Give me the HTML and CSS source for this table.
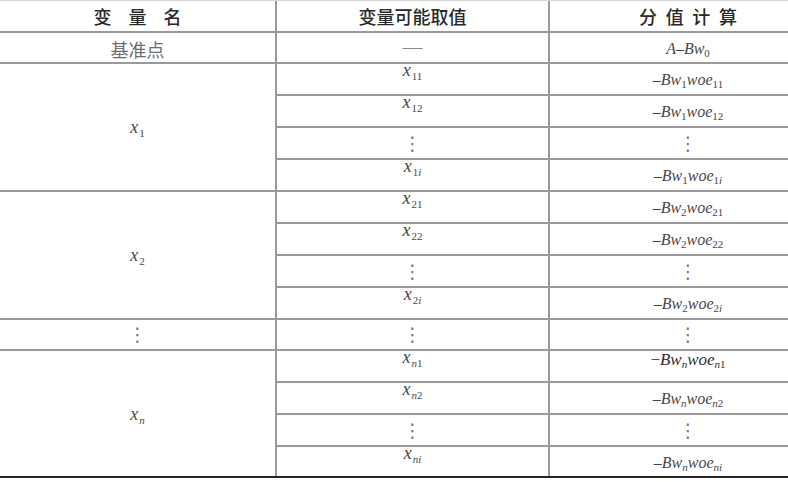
FILE: index.html
```html
<!DOCTYPE html>
<html lang="zh">
<head>
<meta charset="utf-8">
<title>变量分值表</title>
<link rel="stylesheet" href="styles.css">
</head>
<body>
<div class="page">
  <div class="tbl">
    <div class="c c1 h"><span class="sp1">变量名</span></div>
    <div class="c c2 h">变量可能取值</div>
    <div class="c c3 h"><span class="sp3">分值计算</span></div>

    <div class="c c1 base">基准点</div>
    <div class="c c2 dash">—</div>
    <div class="c c3 f"><i>A</i>–<i>Bw</i><sub>0</sub></div>

    <div class="c c1 grp"><span class="lbl"><i>x</i><sub>1</sub></span></div>
    <div class="c c2 v"><i>x</i><sub>11</sub></div>
    <div class="c c3 f">–<i>Bw</i><sub>1</sub><i>woe</i><sub>11</sub></div>
    <div class="c c2 v"><i>x</i><sub>12</sub></div>
    <div class="c c3 f">–<i>Bw</i><sub>1</sub><i>woe</i><sub>12</sub></div>
    <div class="c c2 dots"><span class="vd">⋮</span></div>
    <div class="c c3 dots"><span class="vd">⋮</span></div>
    <div class="c c2 v"><i>x</i><sub>1<i>i</i></sub></div>
    <div class="c c3 f">–<i>Bw</i><sub>1</sub><i>woe</i><sub>1<i>i</i></sub></div>

    <div class="c c1 grp"><span class="lbl"><i>x</i><sub>2</sub></span></div>
    <div class="c c2 v"><i>x</i><sub>21</sub></div>
    <div class="c c3 f">–<i>Bw</i><sub>2</sub><i>woe</i><sub>21</sub></div>
    <div class="c c2 v"><i>x</i><sub>22</sub></div>
    <div class="c c3 f">–<i>Bw</i><sub>2</sub><i>woe</i><sub>22</sub></div>
    <div class="c c2 dots"><span class="vd">⋮</span></div>
    <div class="c c3 dots"><span class="vd">⋮</span></div>
    <div class="c c2 v"><i>x</i><sub>2<i>i</i></sub></div>
    <div class="c c3 f">–<i>Bw</i><sub>2</sub><i>woe</i><sub>2<i>i</i></sub></div>

    <div class="c c1 dots"><span class="vd">⋮</span></div>
    <div class="c c2 dots"><span class="vd">⋮</span></div>
    <div class="c c3 dots"><span class="vd">⋮</span></div>

    <div class="c c1 grp"><span class="lbl"><i>x</i><sub><i>n</i></sub></span></div>
    <div class="c c2 v"><i>x</i><sub><i>n</i>1</sub></div>
    <div class="c c3 f big">−<i>Bw</i><sub><i>n</i></sub><i>woe</i><sub><i>n</i>1</sub></div>
    <div class="c c2 v"><i>x</i><sub><i>n</i>2</sub></div>
    <div class="c c3 f">–<i>Bw</i><sub><i>n</i></sub><i>woe</i><sub><i>n</i>2</sub></div>
    <div class="c c2 dots"><span class="vd">⋮</span></div>
    <div class="c c3 dots"><span class="vd">⋮</span></div>
    <div class="c c2 v"><i>x</i><sub><i>ni</i></sub></div>
    <div class="c c3 f">–<i>Bw</i><sub><i>n</i></sub><i>woe</i><sub><i>ni</i></sub></div>
  </div>
</div>
</body>
</html>
```
FILE: styles.css
```css
html, body {
  margin: 0;
  padding: 0;
  background: #ffffff;
}

.page {
  width: 788px;
  height: 482px;
  overflow: hidden;
}

.tbl {
  display: grid;
  width: 826px;
  grid-template-columns: 275px 273px 278px;
  grid-template-rows: 30px 31px repeat(8, 32px) 31px 32px 32px 32px 31px;
  border-top: 1px solid #d6d6d6;
  border-bottom: 2px solid #262626;
  font-family: "Liberation Serif", "Noto Sans CJK SC", serif;
  color: #474747;
}

.c {
  box-sizing: border-box;
  border-top: 2px solid #9a9a9a;
  text-align: center;
  min-width: 0;
}

.c1 { grid-column: 1; }
.c2 { grid-column: 2; border-left: 2px solid #9a9a9a; }
.c3 { grid-column: 3; border-left: 2px solid #9a9a9a; }

.h {
  border-top: 0;
  display: flex;
  align-items: center;
  justify-content: center;
  font-family: "Noto Sans CJK SC", sans-serif;
  font-size: 18px;
  font-weight: 500;
  color: #2a2a2a;
}

.sp1 { letter-spacing: 17px; margin-right: -17px; }
.sp3 { letter-spacing: 8.7px; margin-right: -8.7px; }

.base {
  display: flex;
  align-items: center;
  justify-content: center;
  padding-top: 2px;
  font-family: "Noto Sans CJK SC", sans-serif;
  font-size: 18px;
  color: #6e6e6e;
}

.dash {
  display: flex;
  align-items: center;
  justify-content: center;
  font-size: 20px;
  color: #8a8a8a;
}

.grp {
  grid-row: span 4;
  display: flex;
  align-items: center;
  justify-content: center;
  font-size: 18px;
}

.lbl {
  display: block;
  line-height: 20px;
}

.v {
  font-size: 18px;
  line-height: 12px;
}

.v sub,
.lbl sub {
  font-size: 11px;
  line-height: 0;
  vertical-align: -4px;
  margin-left: 1px;
}

.f {
  font-size: 16px;
  line-height: 18px;
  padding-top: 7px;
}

.f sub {
  font-size: 11px;
  line-height: 0;
  vertical-align: -3px;
}

.f.big {
  font-size: 17px;
  padding-top: 0;
  color: #2f2f2f;
}

.dots {
  display: flex;
  align-items: center;
  justify-content: center;
}

.vd {
  font-family: "DejaVu Sans", sans-serif;
  font-size: 19px;
  line-height: 1;
  color: #777777;
}
```
